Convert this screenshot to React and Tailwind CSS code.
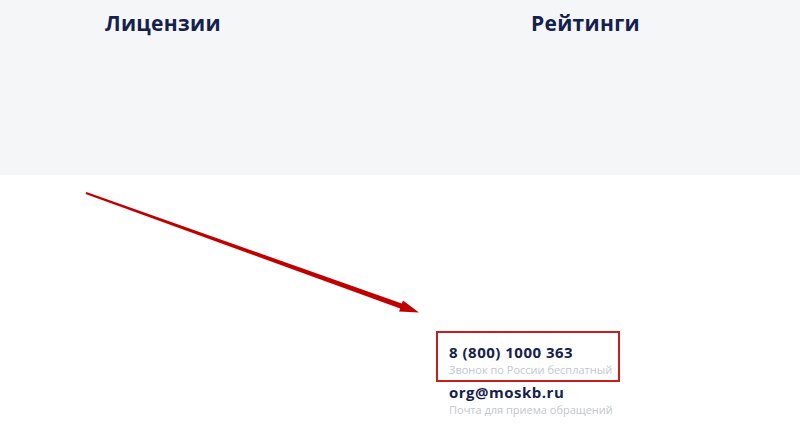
import React from "react";

const Contact = ({ title, note }) => (
  <div className="flex flex-col">
    <span className="text-[15px] font-bold leading-[20px] tracking-[0.5px] text-[#15214d]">{title}</span>
    <span className="text-[11px] leading-[16px] text-[#c3c6cf]">{note}</span>
  </div>
);

export default function App() {
  return (
    <div className="relative w-[800px] h-[435px] overflow-hidden bg-white font-['Open_Sans',sans-serif]">
      <div className="h-[175px] bg-[#f5f6f8] grid grid-cols-2">
        <h2 className="pl-[105px] pt-[8px] text-[21px] font-bold leading-[30px] text-[#15214d] tracking-[0.3px]">
          Лицензии
        </h2>
        <h2 className="pl-[131px] pt-[8px] text-[21px] font-bold leading-[30px] text-[#15214d] tracking-[0.3px]">
          Рейтинги
        </h2>
      </div>

      <div className="pl-[436px] pt-[156px] flex flex-col">
        <div className="w-[184px] h-[51px] border-2 border-[#cc1b1b] pl-[11px] pt-[9px]">
          <Contact title="8 (800) 1000 363" note="Звонок по России бесплатный" />
        </div>
        <div className="pl-[13px]">
          <Contact title="org@moskb.ru" note="Почта для приема обращений" />
        </div>
      </div>

      <svg className="absolute left-0 top-0" width="800" height="435" viewBox="0 0 800 435">
        <polygon
          points="86.4,191.9 401.8,303.6 403,300.4 419,312.4 399,311.6 400.2,308.4 85.6,194.1"
          fill="#c00000"
        />
      </svg>
    </div>
  );
}
